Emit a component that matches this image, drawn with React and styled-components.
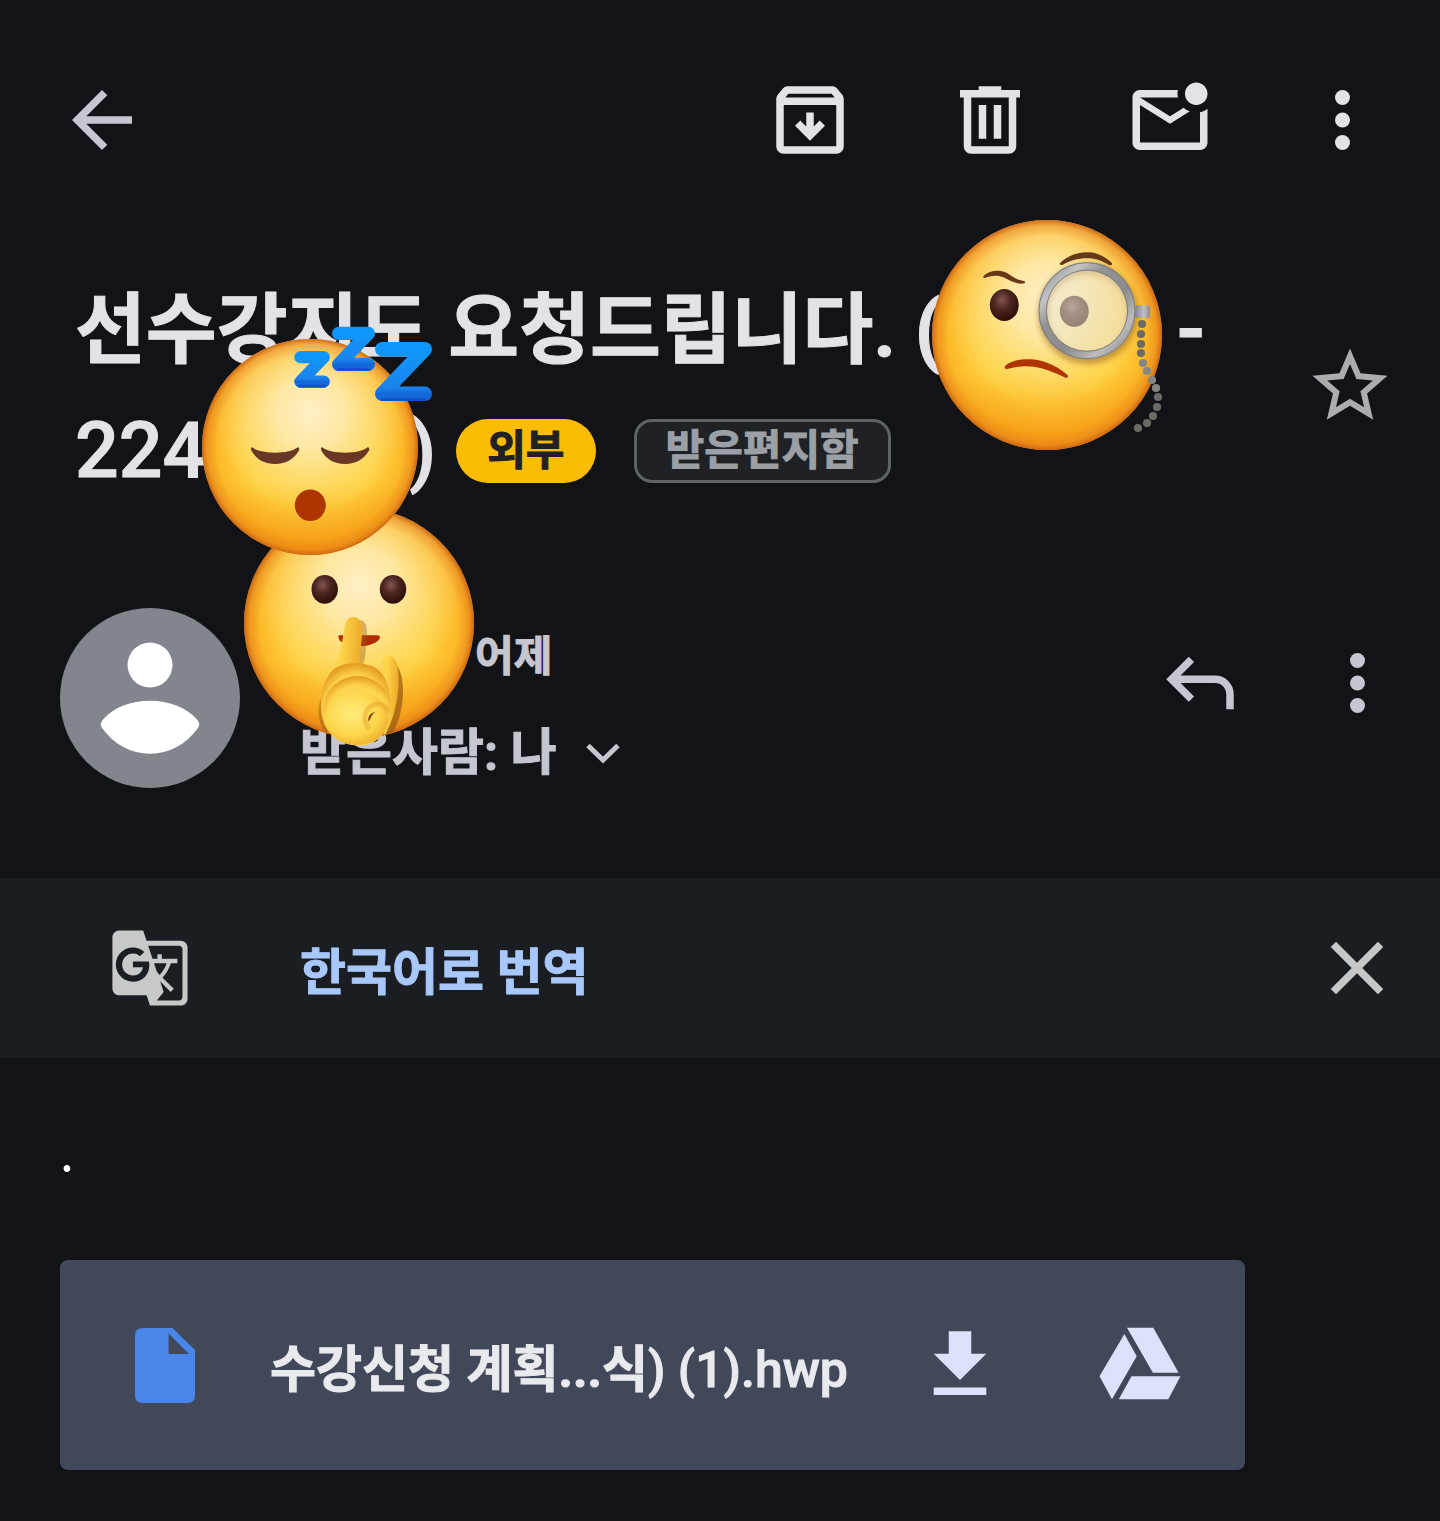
import React, { useState } from "react";
import styled, { createGlobalStyle } from "styled-components";
import { MdGTranslate } from "react-icons/md";

const GlobalStyle = createGlobalStyle`
  * {
    box-sizing: border-box;
  }
  body {
    margin: 0;
    background-color: #111317;
    color: #e3e2e8;
    font-family: Roboto, "Noto Sans CJK KR", sans-serif;
  }
`;

const Page = styled.main`
  width: 100%;
  padding-bottom: 50px;
`;

const IconButton = styled.button`
  display: flex;
  align-items: center;
  justify-content: center;
  flex-shrink: 0;
  width: ${({ $narrow }) => ($narrow ? "75px" : "90px")};
  height: 90px;
  padding: 0;
  border: none;
  background: none;
  color: ${({ $color }) => $color || "#c5c6d0"};
  cursor: pointer;

  svg {
    display: block;
    width: 100%;
    height: 100%;
    fill: currentColor;
  }
`;

const StarButton = styled(IconButton)`
  margin-top: 70px;
`;

const Toolbar = styled.header`
  display: flex;
  align-items: center;
  justify-content: space-between;
  padding: 75px 60px 106px 57px;

  .actions {
    display: flex;
    gap: 90px;
  }
`;

const TitleRow = styled.section`
  display: flex;
  align-items: flex-start;
  justify-content: space-between;
  padding: 0 45px 0 75px;
`;

const Title = styled.h1`
  margin: 0;
  font-size: 77px;
  font-weight: 700;
  line-height: 120px;
  -webkit-text-stroke: 1px currentColor;
`;

const TitleLine = styled.span`
  display: flex;
  align-items: center;
  height: 120px;
  white-space: pre;
`;

/* digits and Latin letters are a step lighter than the Hangul */
const Latin = styled.span`
  font-weight: 500;
`;

/* keeps the room of the words that a sticker covers */
const Covered = styled.span`
  position: relative;
  display: block;
  width: ${({ $width }) => $width}px;
  height: 100%;
`;

const Sticker = styled.svg`
  position: absolute;
  left: ${({ $left }) => $left}px;
  top: ${({ $top }) => $top}px;
  z-index: ${({ $level }) => $level || 1};
  overflow: visible;
  pointer-events: none;
`;

const Chip = styled.span`
  display: flex;
  align-items: center;
  height: 64px;
  padding: 0 31px;
  font-size: 42px;
  line-height: 60px;
`;

const ExternalChip = styled(Chip)`
  margin-left: 20px;
  border-radius: 32px;
  background-color: #fbbc04;
  color: #202124;
`;

const FolderChip = styled(Chip)`
  margin-left: 38px;
  padding: 0 29px;
  border: 3px solid #5f6368;
  border-radius: 18px;
  background-color: #202124;
  color: #9aa0a6;
`;

const SenderRow = styled.section`
  display: flex;
  align-items: flex-start;
  padding: 97px 45px 78px 60px;
  color: #c5c6d0;

  .actions {
    display: flex;
    gap: 75px;
    margin-left: auto;
    padding-top: 30px;
  }
`;

const Avatar = styled.svg`
  flex-shrink: 0;
  width: 180px;
  height: 180px;
  margin-right: 60px;
`;

const SenderLine = styled.div`
  display: flex;
  align-items: center;
  height: 98px;
  font-size: 42px;
  font-weight: 700;
  line-height: 60px;
  -webkit-text-stroke: 1px currentColor;
`;

const Recipients = styled.button`
  display: flex;
  align-items: center;
  gap: 29px;
  height: 94px;
  padding: 0;
  border: none;
  background: none;
  color: inherit;
  font-family: inherit;
  font-size: 50px;
  font-weight: 700;
  line-height: 60px;
  -webkit-text-stroke: 1px currentColor;
  cursor: pointer;
`;

const TranslateBar = styled.section`
  display: flex;
  align-items: center;
  height: 180px;
  padding: 0 38px 0 105px;
  background-color: #1a1d21;
  color: #c7c8c8;
`;

const TranslateIcon = styled.span`
  display: flex;
  align-items: center;
  justify-content: center;
  width: 90px;
  height: 90px;
`;

const TranslateButton = styled.button`
  margin: 0 auto 0 105px;
  padding: 0;
  border: none;
  background: none;
  color: #a8c7fa;
  font-family: inherit;
  font-size: 50px;
  font-weight: 700;
  -webkit-text-stroke: 1px currentColor;
  cursor: pointer;
`;

const Body = styled.p`
  margin: 0;
  padding: 52px 60px 72px;
  color: #fff;
  font-family: "Noto Sans CJK KR", sans-serif;
  font-size: 50px;
  line-height: 78px;
`;

const Attachment = styled.section`
  display: flex;
  align-items: center;
  height: 210px;
  margin: 0 195px 0 60px;
  padding: 0 60px;
  border-radius: 8px;
  background-color: #414859;

  .actions {
    display: flex;
    gap: 90px;
    margin-left: auto;
  }
`;

const DocIcon = styled.svg`
  flex-shrink: 0;
  width: 90px;
  height: 90px;
  margin-right: 60px;
  fill: #4986e8;
`;

const FileName = styled.a`
  color: #e8eaed;
  font-size: 50px;
  font-weight: 700;
  text-decoration: none;
  white-space: nowrap;
  -webkit-text-stroke: 1px currentColor;
`;

const MoreIcon = () => (
  <svg viewBox="2 0 20 24">
    <circle cx="12" cy="6" r="2" />
    <circle cx="12" cy="12" r="2" />
    <circle cx="12" cy="18" r="2" />
  </svg>
);

const HiddenDefs = styled.svg`
  display: block;
  width: 0;
  height: 0;
`;

const StickerDefs = () => (
  <HiddenDefs aria-hidden="true">
    <defs>
      <radialGradient id="base" cx="0.5" cy="0.5" r="0.5">
        <stop offset="0" stopColor="#ffdc50" />
        <stop offset="0.6" stopColor="#ffd340" />
        <stop offset="0.86" stopColor="#fcb928" />
        <stop offset="1" stopColor="#f5a11f" />
      </radialGradient>
      <linearGradient id="floor" x1="0" y1="0" x2="0" y2="1">
        <stop offset="0.66" stopColor="#f28c0c" stopOpacity="0" />
        <stop offset="1" stopColor="#f08508" stopOpacity="0.6" />
      </linearGradient>
      <radialGradient id="glow" cx="0.5" cy="0.34" r="0.46">
        <stop offset="0" stopColor="#fff0c8" />
        <stop offset="0.35" stopColor="#feeaae" stopOpacity="0.9" />
        <stop offset="1" stopColor="#fbdc85" stopOpacity="0" />
      </radialGradient>
      <radialGradient id="rim" cx="0.5" cy="0.5" r="0.5">
        <stop offset="0.86" stopColor="#d9701a" stopOpacity="0" />
        <stop offset="0.95" stopColor="#dd7618" stopOpacity="0.3" />
        <stop offset="1" stopColor="#c45f14" stopOpacity="0.85" />
      </radialGradient>
      <radialGradient id="eye" cx="0.42" cy="0.35" r="0.6">
        <stop offset="0" stopColor="#835454" />
        <stop offset="0.5" stopColor="#4d2622" />
        <stop offset="1" stopColor="#32110a" />
      </radialGradient>
      <linearGradient id="metal" x1="0" y1="0" x2="1" y2="1">
        <stop offset="0" stopColor="#858585" />
        <stop offset="0.2" stopColor="#c4c4c4" />
        <stop offset="0.35" stopColor="#929292" />
        <stop offset="0.6" stopColor="#8c8c8c" />
        <stop offset="0.8" stopColor="#bdbdbd" />
        <stop offset="1" stopColor="#808080" />
      </linearGradient>
      <linearGradient id="clasp" x1="0" y1="0" x2="1" y2="0">
        <stop offset="0" stopColor="#858585" />
        <stop offset="0.6" stopColor="#c0c0c0" />
        <stop offset="1" stopColor="#8c8c8c" />
      </linearGradient>
      <linearGradient id="zed" x1="0" y1="0" x2="0" y2="1">
        <stop offset="0" stopColor="#0f97fb" />
        <stop offset="0.85" stopColor="#1a84ec" />
        <stop offset="1" stopColor="#1468da" />
      </linearGradient>
      <linearGradient id="finger" x1="0" y1="0" x2="1" y2="0.1">
        <stop offset="0" stopColor="#f0a424" />
        <stop offset="0.45" stopColor="#ffd94e" />
        <stop offset="1" stopColor="#eeaa28" />
      </linearGradient>
      <radialGradient id="knuckle" cx="0.5" cy="0.6" r="0.6">
        <stop offset="0" stopColor="#ffe873" />
        <stop offset="0.76" stopColor="#fdd24c" />
        <stop offset="1" stopColor="#e39a20" />
      </radialGradient>
      <radialGradient id="palm" cx="0.42" cy="0.4" r="0.66">
        <stop offset="0" stopColor="#ffee7d" />
        <stop offset="0.65" stopColor="#fdd54b" />
        <stop offset="1" stopColor="#edab2b" />
      </radialGradient>
      <filter id="soft" x="-20%" y="-20%" width="140%" height="140%">
        <feGaussianBlur stdDeviation="3" />
      </filter>
    </defs>
  </HiddenDefs>
);

const Ball = ({ r }) => (
  <>
    {["base", "floor", "glow", "rim"].map((layer) => (
      <circle key={layer} cx={r} cy={r} r={r} fill={`url(#${layer})`} />
    ))}
  </>
);

const CHAIN = [
  [210, 104],
  [209, 114],
  [209, 124],
  [209, 133],
  [211, 143],
  [215, 151],
  [220, 160],
  [224, 168],
  [226, 177],
  [225, 187],
  [221, 196],
  [215, 203],
  [206, 208],
];

const MonocleFace = (props) => (
  <Sticker width="230" height="230" viewBox="0 0 230 230" {...props}>
    <Ball r={115} />
    <ellipse cx="72.3" cy="85" rx="14.5" ry="16" fill="url(#eye)" />
    <ellipse cx="142.3" cy="91.3" rx="14.5" ry="15.6" fill="url(#eye)" />
    <g fill="#643818">
      <path d="M51.5 56C57 50.5 67 49.5 74 52.5C80 56 85 60.5 92.5 61Q94 63.5 91 63.6C83 64 78 60.5 72 57.5C65 54.5 58 56 53 58Q50.5 58 51.5 56Z" />
      <path d="M128 43C136 35 147 32 156 32.3C166 32.5 175 38 180 43Q180.5 46 177 45C170 41 164 38.3 155 38.3C146 38.3 137 41 130.5 45Q127 45.5 128 43Z" />
    </g>
    <path
      d="M73 146C80 139.5 92 138.5 102 139.5C115 141 128 148 136 155.5Q136.5 158.5 133 157.5C122 152 112 148.5 102 146.8C92 145.5 84 146.5 75 149Q72 149.5 73 146Z"
      fill="#ae3500"
    />
    <circle cx="156" cy="94" r="45" fill="none" stroke="#9a5c10" strokeWidth="9" opacity="0.6" filter="url(#soft)" />
    <circle cx="155" cy="90.7" r="41" fill="#ebe6d2" opacity="0.55" />
    <circle cx="155" cy="90.7" r="44.4" fill="none" stroke="url(#metal)" strokeWidth="8.4" />
    <circle cx="155" cy="90.7" r="40.6" fill="none" stroke="#7e7e7e" strokeWidth="1" />
    <circle cx="155" cy="90.7" r="48" fill="none" stroke="#7a7a7a" strokeWidth="1" />
    <rect x="203" y="85.3" width="15" height="12.6" rx="2" fill="url(#clasp)" />
    {CHAIN.map(([x, y], i) => (
      <circle key={i} cx={x} cy={y} r="4.1" fill={i > 3 && i < 8 ? "#868682" : "#6c6a64"} />
    ))}
  </Sticker>
);

const SleepyFace = (props) => (
  <Sticker width="216" height="216" viewBox="0 0 216 216" {...props}>
    <Ball r={108} />
    {[0, 70].map((x) => (
      <path
        key={x}
        transform={`translate(${x} 0)`}
        d="M50.5 108.3C57 115.5 89 115.5 95.5 108.3Q98 108.3 97 111.5C92 120 84 125 73 125C62 125 54 120 49.3 111.5Q48.3 108.3 50.5 108.3Z"
        fill="#683824"
      />
    ))}
    <ellipse cx="108.3" cy="166.3" rx="15.5" ry="15.7" fill="#ae3500" />
    <g fill="none" stroke="url(#zed)" strokeLinecap="round" strokeLinejoin="round">
      <path d="M98.4 18.2H121.8L98.4 42.6H121.8" strokeWidth="12.2" />
      <path d="M136.6 -5.6H166.4L136.6 25.4H166.4" strokeWidth="13.2" />
      <path d="M180.2 10.2H222.8L180.2 54.8H222.8" strokeWidth="14.4" />
    </g>
    <g fill="none" stroke="#0a45b4" strokeWidth="3" strokeLinecap="round" opacity="0.55">
      <path d="M97.5 47.2H122.5" />
      <path d="M136 30.5H167" />
      <path d="M179.5 60.5H223.5" />
    </g>
  </Sticker>
);

const ShushFace = (props) => (
  <Sticker width="230" height="230" viewBox="0 0 230 230" {...props}>
    <Ball r={115} />
    <ellipse cx="80.7" cy="81.3" rx="13.2" ry="14.4" fill="url(#eye)" />
    <ellipse cx="149" cy="81.3" rx="13.2" ry="14.4" fill="url(#eye)" />
    <path
      d="M94.5 128C94 137 108 138 119 138C128 137.5 135.5 133 136 129.4Q136 127 133 127.2L97 127.3Q94.5 127 94.5 128Z"
      fill="#b02c00"
    />
    <g fill="#9c5c14">
      <path d="M115 112C124 112 124 124 122 138C121.5 150 120 155 118 158L110 158Z" opacity="0.4" />
      <path d="M152 156C164 172 159 208 149 224C147 226 143 227 140 227Z" opacity="0.75" />
      <path d="M79 186C72 198 74 214 80 223L88 224Z" opacity="0.5" />
    </g>
    <path
      d="M139 154C140 146 150 145 153 156C157 174 154 204 141 227L132 215C142 196 143 174 139 154Z"
      fill="url(#finger)"
    />
    <path
      d="M101 117C102.5 106 117 106.5 118.3 118C118.5 130 116 144 115.5 158L112 200L78 204C76 190 82 174 91 158C96 146 99 130 101 117Z"
      fill="url(#finger)"
    />
    <path
      d="M89 162C97 154 118 153 130 159C143 166 148 184 146 205C145 224 133 237.5 115 237.5C97 237.5 84 228 79 212C74 194 78 173 89 162Z"
      fill="url(#knuckle)"
    />
    <ellipse cx="113.5" cy="200" rx="33.5" ry="32" fill="url(#knuckle)" />
    <ellipse cx="113" cy="210.5" rx="31.5" ry="26.5" fill="url(#palm)" />
    <path
      d="M144 203C142 195 131 194 126 199C119 205 120 213 124 219"
      fill="none"
      stroke="#dd921c"
      strokeWidth="5"
      strokeLinecap="round"
      opacity="0.35"
    />
    <path d="M131 204C126 205 123.5 209 124.5 213.5C127 211 127 207 131 204Z" fill="#8c3c04" />
  </Sticker>
);

function App() {
  const [starred, setStarred] = useState(false);
  const [translate, setTranslate] = useState(true);

  return (
    <>
      <GlobalStyle />
      <StickerDefs />
      <Page>
        <Toolbar>
          <IconButton aria-label="뒤로">
            <svg viewBox="0 0 24 24">
              <path d="M20 11H7.83l5.59-5.59L12 4l-8 8 8 8 1.41-1.41L7.83 13H20v-2z" />
            </svg>
          </IconButton>
          <div className="actions">
            <IconButton $color="#e3e2e8" aria-label="보관">
              <svg viewBox="0 0 24 24">
                <path
                  fillRule="evenodd"
                  d="M20.54 5.23l-1.39-1.68C18.88 3.21 18.47 3 18 3H6c-.47 0-.88.21-1.16.55L3.46 5.23C3.17 5.57 3 6.02 3 6.5V19c0 1.1.9 2 2 2h14c1.1 0 2-.9 2-2V6.5c0-.48-.17-.93-.46-1.27zM6.24 5h11.52l.83 1H5.42l.82-1zM5 19V8h14v11H5z"
                />
                <path d="M12 17.5l4-4-1.4-1.4-1.6 1.6V10h-2v3.7l-1.6-1.6L8 13.5z" />
              </svg>
            </IconButton>
            <IconButton $color="#e3e2e8" aria-label="삭제">
              <svg viewBox="0 0 24 24">
                <path
                  fillRule="evenodd"
                  d="M5 6H4V4h5V3h6v1h5v2h-1v13c0 1.1-.9 2-2 2H7c-1.1 0-2-.9-2-2V6zM17 6H7v13h10V6zM9 17h2V8H9v9zM13 17h2V8h-2v9z"
                />
              </svg>
            </IconButton>
            <IconButton $color="#e3e2e8" aria-label="읽지 않음으로 표시">
              <svg viewBox="0 0 24 24">
                <path d="M22 8.98V18c0 1.1-.9 2-2 2H4c-1.1 0-2-.9-2-2V6c0-1.1.9-2 2-2h10.1c-.06.32-.1.66-.1 1 0 .34.04.68.1 1H4l8 5 3.67-2.29c.47.43 1.02.76 1.63.98L12 13 4 8v10h16V9.9c.74-.15 1.42-.48 2-.92zM16 5c0 1.66 1.34 3 3 3s3-1.34 3-3-1.34-3-3-3-3 1.34-3 3z" />
              </svg>
            </IconButton>
            <IconButton $narrow $color="#e3e2e8" aria-label="옵션 더보기">
              <MoreIcon />
            </IconButton>
          </div>
        </Toolbar>

        <TitleRow>
          <Title>
            <TitleLine>
              선수강지도 요청드립니다. (
              <Covered $width={234}>
                <MonocleFace $left={-10} $top={-51} />
              </Covered>
              -
            </TitleLine>
            <TitleLine>
              <Latin>224</Latin>
              <Covered $width={203}>
                <SleepyFace $left={-4} $top={-52} $level={2} />
              </Covered>
              <Latin>)</Latin>
              <ExternalChip>외부</ExternalChip>
              <FolderChip>받은편지함</FolderChip>
            </TitleLine>
          </Title>
          <StarButton
            $color="#abacae"
            aria-label="별표"
            aria-pressed={starred}
            onClick={() => setStarred(!starred)}
          >
            <svg viewBox="0 0 24 24">
              {starred ? (
                <path d="M12 17.27L18.18 21l-1.64-7.03L22 9.24l-7.19-.61L12 2 9.19 8.63 2 9.24l5.46 4.73L5.82 21z" />
              ) : (
                <path d="M22 9.24l-7.19-.62L12 2 9.19 8.63 2 9.24l5.46 4.73L5.82 21 12 17.27 18.18 21l-1.63-7.03L22 9.24zM12 15.4l-3.76 2.27 1-4.28-3.32-2.88 4.38-.38L12 6.1l1.71 4.04 4.38.38-3.32 2.88 1 4.28L12 15.4z" />
              )}
            </svg>
          </StarButton>
        </TitleRow>

        <SenderRow>
          <Avatar viewBox="0 0 180 180">
            <circle cx="90" cy="90" r="90" fill="#82868c" />
            <circle cx="90" cy="57" r="22.5" fill="#fff" />
            <path
              d="M43.5 111C54 99 71 92.7 90 92.7C109 92.7 126 99 136.5 111Q141 115.5 138 120C126 136.5 109 145.7 90 145.7C71 145.7 54 136.5 42 120Q39 115.5 43.5 111Z"
              fill="#fff"
            />
          </Avatar>
          <div>
            <SenderLine>
              <Covered $width={175}>
                <ShushFace $left={-56} $top={-100} />
              </Covered>
              <time>어제</time>
            </SenderLine>
            <Recipients>
              받은사람: 나
              <svg width="34" height="21" viewBox="0 0 34 21">
                <path d="M2 2.5L17 17L32 2.5" fill="none" stroke="currentColor" strokeWidth="5" />
              </svg>
            </Recipients>
          </div>
          <div className="actions">
            <IconButton aria-label="답장">
              <svg viewBox="0 0 24 24">
                <path d="M19 19v-4c0-.83-.29-1.54-.88-2.12C17.54 12.29 16.83 12 16 12H6.83l3.58 3.6L9 17l-6-6 6-6 1.41 1.4L6.83 10H16c1.38 0 2.56.49 3.54 1.46C20.51 12.44 21 13.62 21 15v4h-2z" />
              </svg>
            </IconButton>
            <IconButton $narrow aria-label="메일 옵션 더보기">
              <MoreIcon />
            </IconButton>
          </div>
        </SenderRow>

        {translate && (
          <TranslateBar>
            <TranslateIcon>
              <MdGTranslate size={82} />
            </TranslateIcon>
            <TranslateButton>한국어로 번역</TranslateButton>
            <IconButton $color="#c7c8c8" aria-label="닫기" onClick={() => setTranslate(false)}>
              <svg viewBox="0 0 24 24">
                <path d="M19 6.41L17.59 5 12 10.59 6.41 5 5 6.41 10.59 12 5 17.59 6.41 19 12 13.41 17.59 19 19 17.59 13.41 12z" />
              </svg>
            </IconButton>
          </TranslateBar>
        )}

        <Body>.</Body>

        <Attachment>
          <DocIcon viewBox="0 0 90 90">
            <path
              fillRule="evenodd"
              d="M22.5 8H52.5L75 30V75.5Q75 83 67.5 83H22.5Q15 83 15 75.5V15.5Q15 8 22.5 8ZM48.6 13.5V34H69Z"
            />
          </DocIcon>
          <FileName href="#file">
            수강신청 계획...식<Latin>) (1).hwp</Latin>
          </FileName>
          <div className="actions">
            <IconButton $color="#dde1fa" aria-label="다운로드">
              <svg viewBox="0 0 24 24">
                <path d="M19 9h-4V3H9v6H5l7 7 7-7zM5 18v2h14v-2H5z" />
              </svg>
            </IconButton>
            <IconButton $color="#dde1fa" aria-label="드라이브에 추가">
              <svg viewBox="0 0 90 90">
                <path d="M32 7.7H58.3L83.6 52.7H57.9ZM29.4 14L41.7 36.3L17 79.3L4.5 56.3ZM36.5 56.3H85.5L73.3 79.3H23.8Z" />
              </svg>
            </IconButton>
          </div>
        </Attachment>
      </Page>
    </>
  );
}

export default App;
